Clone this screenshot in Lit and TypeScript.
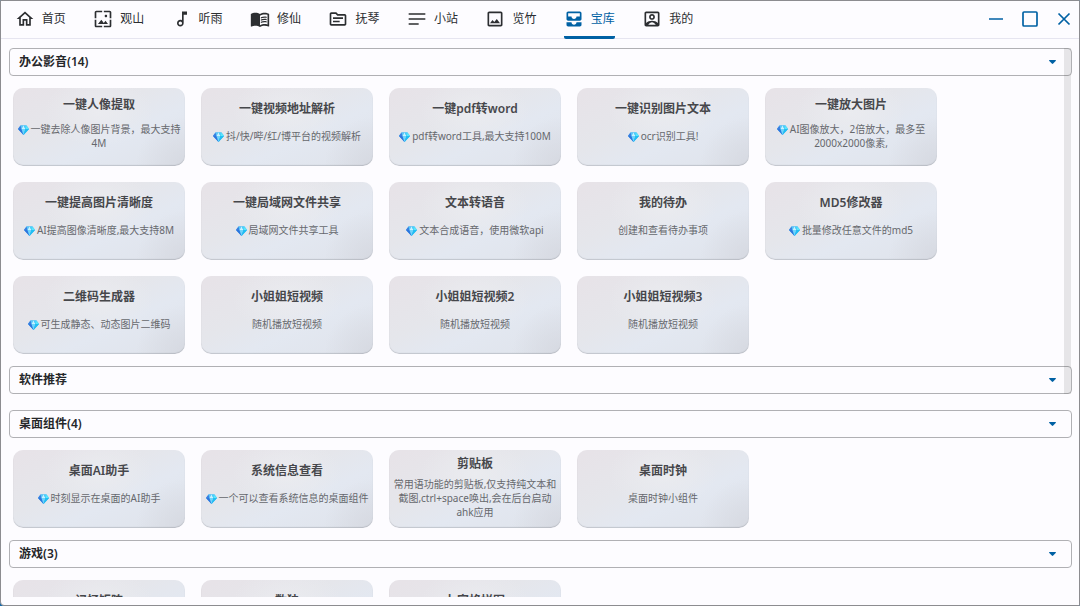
import { LitElement, html, css, svg, nothing } from "lit";
import { customElement, property, state } from "lit/decorators.js";
import { classMap } from "lit/directives/class-map.js";

const icons: Record<string, unknown> = {
  home: svg`<path d="M12 5.69l5 4.5V18h-2v-6H9v6H7v-7.81l5-4.5M12 3L2 12h3v8h6v-6h2v6h6v-8h3L12 3z"/>`,
  wallpaper: svg`<path d="M4 4h7V2H4c-1.1 0-2 .9-2 2v7h2V4zm6 9l-4 5h12l-3-4-2.03 2.71L10 13zm7-4.500c0-.83-.67-1.500-1.500-1.500S14 7.670 14 8.500s.67 1.500 1.500 1.500S17 9.330 17 8.500zM20 2h-7v2h7v7h2V4c0-1.100-.9-2-2-2zm0 18h-7v2h7c1.100 0 2-.9 2-2v-7h-2v7zM4 13H2v7c0 1.100.9 2 2 2h7v-2H4v-7z"/>`,
  music: svg`<path d="M12 3l.01 10.550c-.59-.34-1.270-.55-2-.55C7.790 13 6 14.790 6 17s1.790 4 4.010 4S14 19.210 14 17V7h4V3h-6zm-1.990 16c-1.100 0-2-.9-2-2s.9-2 2-2 2 .9 2 2-.9 2-2 2z"/>`,
  book: svg`<path d="M21 5c-1.110-.35-2.330-.5-3.500-.5-1.950 0-4.050.4-5.500 1.500-1.450-1.100-3.550-1.500-5.500-1.500S2.450 4.900 1 6v14.650c0 .25.25.5.5.5.1 0 .15-.05.25-.05C3.100 20.450 5.050 20 6.500 20c1.950 0 4.050.4 5.500 1.500 1.350-.85 3.800-1.500 5.500-1.500 1.650 0 3.350.3 4.750 1.050.1.05.15.05.25.05.25 0 .5-.25.5-.5V6c-.6-.45-1.250-.75-2-1zm0 13.500c-1.100-.35-2.300-.5-3.500-.5-1.700 0-4.150.65-5.500 1.500V8c1.350-.85 3.800-1.500 5.500-1.500 1.200 0 2.400.15 3.500.5v11.500z"/><path d="M17.500 10.500c.88 0 1.730.09 2.500.26V9.240c-.79-.15-1.640-.24-2.500-.24-1.700 0-3.240.29-4.500.83v1.660c1.130-.64 2.700-.99 4.500-.99zM13 12.490v1.660c1.130-.64 2.700-.99 4.500-.99.88 0 1.730.09 2.500.26V11.900c-.79-.15-1.640-.24-2.500-.24-1.700 0-3.240.3-4.500.83zm4.500 1.840c-1.700 0-3.240.29-4.500.83v1.660c1.130-.64 2.700-.99 4.500-.99.88 0 1.730.09 2.500.26v-1.520c-.79-.16-1.640-.24-2.500-.24z"/>`,
  folder: svg`<path d="M20 6h-8l-2-2H4c-1.100 0-1.990.9-1.990 2L2 18c0 1.100.9 2 2 2h16c1.100 0 2-.9 2-2V8c0-1.100-.9-2-2-2zm0 12H4V6h5.170l2 2H20v10zm-2-6H6v-2h12v2zm-4 4H6v-2h8v2z"/>`,
  lines: svg`<path d="M14 17H2v2h12v-2zm8-6H2v2h20v-2zM2 7h20V5H2v2z"/>`,
  image: svg`<path d="M19 5v14H5V5h14m0-2H5c-1.100 0-2 .9-2 2v14c0 1.100.9 2 2 2h14c1.100 0 2-.9 2-2V5c0-1.100-.9-2-2-2zm-4.860 8.860l-3 3.870L9 13.140 6 17h12l-3.860-5.140z"/>`,
  inbox: svg`<path d="M19 3H5c-1.100 0-2 .9-2 2v7c0 1.100.9 2 2 2h14c1.100 0 2-.9 2-2V5c0-1.100-.9-2-2-2zm0 6h-4c0 1.620-1.380 3-3 3s-3-1.380-3-3H5V5h14v4zm-4 7h6v3c0 1.100-.9 2-2 2H5c-1.100 0-2-.9-2-2v-3h6c0 1.660 1.340 3 3 3s3-1.340 3-3z"/>`,
  account: svg`<path d="M19 3H5c-1.110 0-2 .9-2 2v14c0 1.100.89 2 2 2h14c1.100 0 2-.9 2-2V5c0-1.100-.9-2-2-2zm0 2v11.790C17.240 15.060 14.760 14 12 14s-5.240 1.060-7 2.790V5h14zM7.500 19v-.17C8.780 17.730 10.330 16 12 16s3.220 1.730 4.500 2.830V19h-9zM12 13c1.930 0 3.500-1.570 3.500-3.500S13.930 6 12 6 8.500 7.570 8.500 9.500 10.070 13 12 13zm0-5c.83 0 1.500.67 1.500 1.500S12.830 11 12 11s-1.500-.67-1.500-1.500S11.170 8 12 8z"/>`,
};

interface Tool {
  title: string;
  desc?: string;
  gem?: boolean;
}

interface Section {
  title: string;
  tools: Tool[];
}

const tabs = [
  ["首页", "home"],
  ["观山", "wallpaper"],
  ["听雨", "music"],
  ["修仙", "book"],
  ["抚琴", "folder"],
  ["小站", "lines"],
  ["览竹", "image"],
  ["宝库", "inbox"],
  ["我的", "account"],
];

const officeSections: Section[] = [
  {
    title: "办公影音(14)",
    tools: [
      { title: "一键人像提取", desc: "一键去除人像图片背景，最大支持4M", gem: true },
      { title: "一键视频地址解析", desc: "抖/快/哔/红/博平台的视频解析", gem: true },
      { title: "一键pdf转word", desc: "pdf转word工具,最大支持100M", gem: true },
      { title: "一键识别图片文本", desc: "ocr识别工具!", gem: true },
      { title: "一键放大图片", desc: "AI图像放大，2倍放大，最多至2000x2000像素,", gem: true },
      { title: "一键提高图片清晰度", desc: "AI提高图像清晰度,最大支持8M", gem: true },
      { title: "一键局域网文件共享", desc: "局域网文件共享工具", gem: true },
      { title: "文本转语音", desc: "文本合成语音，使用微软api", gem: true },
      { title: "我的待办", desc: "创建和查看待办事项" },
      { title: "MD5修改器", desc: "批量修改任意文件的md5", gem: true },
      { title: "二维码生成器", desc: "可生成静态、动态图片二维码", gem: true },
      { title: "小姐姐短视频", desc: "随机播放短视频" },
      { title: "小姐姐短视频2", desc: "随机播放短视频" },
      { title: "小姐姐短视频3", desc: "随机播放短视频" },
    ],
  },
  { title: "软件推荐", tools: [] },
];

const desktopSections: Section[] = [
  {
    title: "桌面组件(4)",
    tools: [
      { title: "桌面AI助手", desc: "时刻显示在桌面的AI助手", gem: true },
      { title: "系统信息查看", desc: "一个可以查看系统信息的桌面组件", gem: true },
      { title: "剪贴板", desc: "常用语功能的剪贴板,仅支持纯文本和截图,ctrl+space唤出,会在后台启动ahk应用" },
      { title: "桌面时钟", desc: "桌面时钟小组件" },
    ],
  },
  {
    title: "游戏(3)",
    tools: [{ title: "记忆矩阵" }, { title: "数独" }, { title: "九宫格拼图" }],
  },
];

@customElement("tool-card")
export class ToolCard extends LitElement {
  @property({ attribute: false }) tool!: Tool;

  static styles = css`
    :host {
      display: block;
    }
    .card {
      display: flex;
      flex-direction: column;
      align-items: center;
      justify-content: space-evenly;
      box-sizing: border-box;
      width: 100%;
      height: 78px;
      padding: 0 2px;
      border: 0;
      border-radius: 10px;
      font-family: inherit;
      color: #1a1c1e;
      text-align: center;
      cursor: pointer;
      background:
        radial-gradient(circle at 100% 100%, #d6d9e1 0, rgba(214, 217, 225, 0) 26%),
        radial-gradient(ellipse at 50% 30%, rgba(235, 236, 240, 0.9) 0, rgba(235, 236, 240, 0) 45%),
        linear-gradient(155deg, #e7e3e8 5%, #e5e6eb 40%, #e3e8f1 62%, #dfe3eb 100%);
      box-shadow: inset 0 -1px 1px rgba(60, 64, 72, 0.2);
    }
    .card::after {
      content: "";
    }
    .title {
      font-size: 12px;
      line-height: 18px;
      font-weight: 600;
      color: #46474b;
    }
    .desc {
      min-height: 14px;
      font-size: 10px;
      line-height: 14px;
      color: #66686d;
    }
    .gem {
      width: 11px;
      height: 10px;
      margin-right: 2px;
      vertical-align: -2px;
    }
  `;

  render() {
    const { title, desc, gem } = this.tool;
    return html`<button class="card" type="button">
      <span class="title">${title}</span>
      <span class="desc"
        >${gem
          ? html`<svg class="gem" viewBox="0 0 22 20" aria-hidden="true">
              <path d="M5 1h12l5 7-11 12L0 8z" fill="#2aa5f2" />
              <path d="M5 1l2 7H0z" fill="#3d7fe0" />
              <path d="M5 1h6L7 8z" fill="#58c6f8" />
              <path d="M11 1l4 7H7z" fill="#c9f3ff" />
              <path d="M11 1h6l-2 7z" fill="#49d3fb" />
              <path d="M17 1l5 7h-7z" fill="#5be6fb" />
              <path d="M0 8h7l4 12z" fill="#2f74dc" />
              <path d="M7 8h8l-4 12z" fill="#6fd4fb" />
              <path d="M22 8h-7l-4 12z" fill="#1fc0f2" />
            </svg>`
          : nothing}${desc ?? ""}</span
      >
    </button>`;
  }
}

@customElement("tool-section")
export class ToolSection extends LitElement {
  @property({ attribute: false }) section!: Section;
  @state() private open = true;

  static styles = css`
    :host {
      display: block;
    }
    .heading {
      margin: 0;
    }
    .toggle {
      display: flex;
      align-items: center;
      justify-content: space-between;
      box-sizing: border-box;
      width: 100%;
      height: 28px;
      padding: 0 15px 0 9px;
      border: 1px solid #b0b0b4;
      border-radius: 4px;
      background: transparent;
      font-family: inherit;
      font-size: 12px;
      line-height: 18px;
      font-weight: 600;
      color: #25272a;
      cursor: pointer;
    }
    .caret {
      width: 7px;
      height: 4px;
      fill: #0061a4;
    }
    .grid {
      display: grid;
      grid-template-columns: repeat(auto-fill, 172px);
      gap: 16px;
      padding: 12px 4px;
    }
  `;

  render() {
    const { title, tools } = this.section;
    return html`
      <h2 class="heading">
        <button
          class="toggle"
          type="button"
          aria-expanded=${this.open ? "true" : "false"}
          @click=${() => (this.open = !this.open)}
        >
          <span>${title}</span>
          <svg class="caret" viewBox="0 0 7 4" aria-hidden="true">
            <path d="M.5 0h6q.8.3.2 1L4.200 3.600q-.7.6-1.400 0L.3 1Q-.3.3.5 0z" />
          </svg>
        </button>
      </h2>
      ${this.open && tools.length
        ? html`<div class="grid">${tools.map((t) => html`<tool-card .tool=${t}></tool-card>`)}</div>`
        : nothing}
    `;
  }
}

@customElement("app-root")
export class AppRoot extends LitElement {
  @state() private active = "宝库";

  static styles = css`
    :host {
      display: block;
      height: 100vh;
      background: #1668a8;
      font-family: "Noto Sans", "Noto Sans CJK SC", sans-serif;
    }
    .window {
      display: flex;
      flex-direction: column;
      box-sizing: border-box;
      height: 100%;
      border: 1px solid #8c8c90;
      border-bottom-left-radius: 4px;
      background: #fdfcff;
      overflow: hidden;
    }
    .bar {
      display: flex;
      justify-content: space-between;
      flex: none;
      height: 38px;
      box-shadow: inset 0 -1px #e6e5f0;
    }
    .tabs {
      display: grid;
      grid-template-columns: repeat(9, 1fr);
      flex: 0 1 706px;
    }
    .tab {
      display: flex;
      justify-content: center;
      color: #2c2e31;
      font-size: 12px;
      line-height: 18px;
      text-decoration: none;
      white-space: nowrap;
    }
    .tab-body {
      display: flex;
      align-items: center;
      gap: 7px;
      box-sizing: border-box;
      border-bottom: 3px solid transparent;
    }
    .tab.active {
      color: #0061a4;
    }
    .active .tab-body {
      border-bottom-color: #0061a4;
      border-radius: 2px;
    }
    .icon {
      width: 20px;
      height: 20px;
      fill: currentColor;
    }
    .controls {
      display: flex;
      align-items: center;
      gap: 14px;
      padding: 0 5px 2px 0;
    }
    .control {
      display: flex;
      padding: 0;
      border: 0;
      background: none;
      cursor: pointer;
    }
    .control-icon {
      width: 20px;
      height: 20px;
      fill: none;
      stroke: #0061a4;
      stroke-width: 1.7;
    }
    .content {
      display: flex;
      flex-direction: column;
      flex: 1;
      gap: 16px;
      min-height: 0;
      padding: 9px 7px 8px 8px;
      overflow: hidden;
    }
    .group {
      position: relative;
      flex: none;
    }
    .group.rest {
      flex: 1;
      min-height: 0;
      overflow: hidden;
    }
    .scrollbar {
      position: absolute;
      top: 0;
      right: 1px;
      bottom: 0;
      width: 7px;
      background: rgba(26, 28, 30, 0.1);
      pointer-events: none;
    }
  `;

  private select(e: Event, name: string) {
    e.preventDefault();
    this.active = name;
  }

  render() {
    return html`<div class="window">
      <header class="bar">
        <nav class="tabs">
          ${tabs.map(
            ([name, icon]) => html`<a
              href="#${icon}"
              class=${classMap({ tab: true, active: name === this.active })}
              @click=${(e: Event) => this.select(e, name)}
              ><span class="tab-body"
                ><svg class="icon" viewBox="0 0 24 24" aria-hidden="true">${icons[icon]}</svg
                ><span>${name}</span></span
              ></a
            >`
          )}
        </nav>
        <div class="controls">
          <button class="control" type="button" aria-label="最小化">
            <svg class="control-icon" viewBox="0 0 20 20"><path d="M3 10h14" /></svg>
          </button>
          <button class="control" type="button" aria-label="最大化">
            <svg class="control-icon" viewBox="0 0 20 20"><rect x="3" y="3" width="14" height="14" rx="1" /></svg>
          </button>
          <button class="control" type="button" aria-label="关闭">
            <svg class="control-icon" viewBox="0 0 20 20"><path d="M4.500 4.500l11 11M15.500 4.500l-11 11" /></svg>
          </button>
        </div>
      </header>
      <main class="content">
        <div class="group">
          ${officeSections.map((s) => html`<tool-section .section=${s}></tool-section>`)}
          <div class="scrollbar"></div>
        </div>
        <div class="group rest">
          ${desktopSections.map((s) => html`<tool-section .section=${s}></tool-section>`)}
        </div>
      </main>
    </div>`;
  }
}
